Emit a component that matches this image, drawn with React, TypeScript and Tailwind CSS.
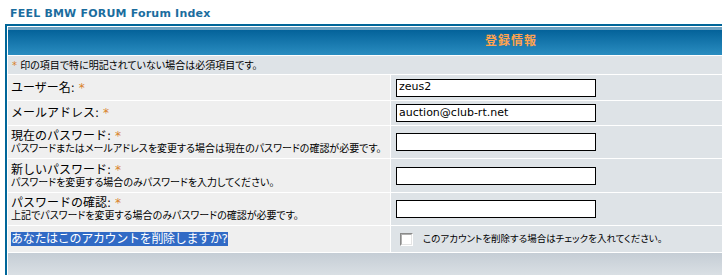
const FONT = "font-['DejaVu_Sans','Noto_Sans_CJK_JP',sans-serif]";

function Star() {
  return <span className="text-[#d9822b]">*</span>;
}

function Label({ title, hint }: { title: string; hint?: string }) {
  return (
    <div className="bg-[#efefef] pl-[3px] flex flex-col justify-center text-black">
      <span className="text-[12px] leading-[14px]">
        {title}: <Star />
      </span>
      {hint && <span className="text-[10px] leading-[12px] [font-feature-settings:'palt']">{hint}</span>}
    </div>
  );
}

function Field({ value = '' }: { value?: string }) {
  return (
    <div className="bg-[#dee3e7] pl-[5px] flex items-center">
      <div className="w-[200px] h-[18px] border border-black bg-white pl-[2px] flex items-center text-[11px] text-black">
        {value}
      </div>
    </div>
  );
}

const ROWS = [
  { title: 'ユーザー名', value: 'zeus2', h: 'h-[25px]' },
  { title: 'メールアドレス', value: 'auction@club-rt.net', h: 'h-[24px]' },
  { title: '現在のパスワード', hint: 'パスワードまたはメールアドレスを変更する場合は現在のパスワードの確認が必要です。', h: 'h-[32px]' },
  { title: '新しいパスワード', hint: 'パスワードを変更する場合のみパスワードを入力してください。', h: 'h-[33px]' },
  { title: 'パスワードの確認', hint: '上記でパスワードを変更する場合のみパスワードの確認が必要です。', h: 'h-[32px]' },
];

export default function App() {
  return (
    <div className={`w-[722px] h-[275px] overflow-hidden bg-white ${FONT}`}>
      <div className="h-[24px] pt-[7px] pl-[10px]">
        <span className="text-[11px] leading-[13px] font-bold text-[#1b6d9e] tracking-[0.2px] block">FEEL BMW FORUM Forum Index</span>
      </div>

      <div className="ml-[5px] w-[1012px] border-2 border-[#006699] bg-white p-px flex flex-col gap-px">
        {/* header */}
        <div className="h-[28px] flex items-center justify-center bg-[linear-gradient(to_bottom,#6ea3c3_0px,#6ea3c3_3px,#04629a_3px,#2a8dc0_100%)]">
          <span className="text-[12px] font-bold text-[#ffa34f] tracking-[1px]">登録情報</span>
        </div>

        <div className="h-[18px] bg-[#dee3e7] pl-[4px] flex items-center text-[10px] text-black [font-feature-settings:'palt']">
          <Star />&nbsp;印の項目で特に明記されていない場合は必須項目です。
        </div>

        {ROWS.map(r => (
          <div key={r.title} className={`grid grid-cols-[382px_1fr] gap-px ${r.h}`}>
            <Label title={r.title} hint={r.hint} />
            <Field value={r.value} />
          </div>
        ))}

        <div className="grid grid-cols-[382px_1fr] gap-px h-[26px]">
          <div className="bg-[#efefef] pl-[3px] flex items-center">
            <span className="text-[12px] leading-[14px] bg-[#316ac5] text-white tracking-[-0.3px]">あなたはこのアカウントを削除しますか?</span>
          </div>
          <div className="bg-[#dee3e7] pl-[9px] flex items-center gap-[10px]">
            <div className="w-[13px] h-[13px] border border-t-[#8a8a8a] border-l-[#8a8a8a] border-r-white border-b-white">
              <div className="w-full h-full border border-t-[#b0b0b0] border-l-[#b0b0b0] border-r-[#e4e4e4] border-b-[#e4e4e4] bg-white" />
            </div>
            <span className="text-[9.5px] text-black [font-feature-settings:'palt']">このアカウントを削除する場合はチェックを入れてください。</span>
          </div>
        </div>

        <div className="h-[28px] bg-gradient-to-b from-[#c5cdd5] to-[#dfe4e8]" />
      </div>
    </div>
  );
}
